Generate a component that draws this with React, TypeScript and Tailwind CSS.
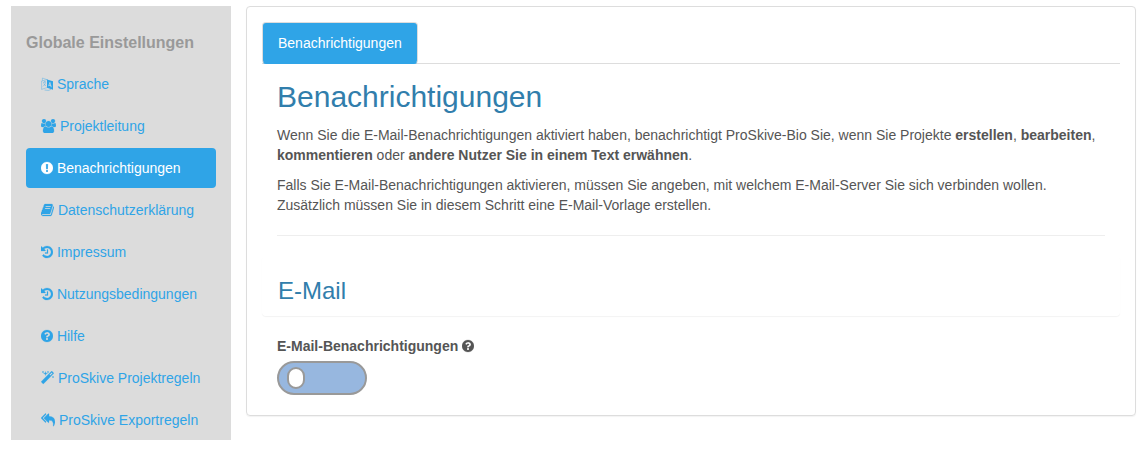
import type { ReactNode } from "react";

const EXCLAMATION =
  "M896 128q209 0 385.5 103t279.5 279.5 103 385.5-103 385.5-279.5 279.5-385.5 103-385.5-103-279.5-279.5-103-385.5 103-385.5 279.5-279.5 385.5-103zm128 1247v-190q0-14-9-23.5t-22-9.5h-192q-13 0-23 10t-10 23v190q0 13 10 23t23 10h192q13 0 22-9.5t9-23.5zm-2-344l18-621q0-12-10-18-10-8-24-8h-220q-14 0-24 8-10 6-10 18l17 621q0 10 10 17.5t24 7.5h185q14 0 23.5-7.5t10.5-17.5z";
const QUESTION =
  "M1024 1376v-192q0-14-9-23t-23-9h-192q-14 0-23 9t-9 23v192q0 14 9 23t23 9h192q14 0 23-9t9-23zm256-672q0-88-55.5-163t-138.5-116-170-41q-243 0-371 213-15 24 8 42l132 100q7 6 19 6 16 0 25-12 53-68 86-92 34-24 86-24 48 0 85.5 26t37.5 59q0 38-20 61t-68 45q-63 28-115.5 86.5t-52.5 125.5v36q0 14 9 23t23 9h192q14 0 23-9t9-23q0-19 21.5-49.5t54.5-49.5q32-18 49-28.5t46-35 44.5-48 28-60.5 12.5-81zm384 192q0 209-103 385.5t-279.5 279.5-385.5 103-385.5-103-279.5-279.5-103-385.5 103-385.5 279.5-279.5 385.5-103 385.5 103 279.5 279.5 103 385.5z";
const HISTORY =
  "M1664 896q0 156-61 298t-164 245-245 164-298 61q-172 0-327-72.5t-264-204.5q-7-10-6.5-22.5t8.5-20.5l137-138q10-9 25-9 16 2 23 12 73 95 179 147t225 52q104 0 198.5-40.5t163.5-109.5 109.5-163.5 40.5-198.5-40.5-198.5-109.5-163.5-163.5-109.5-198.5-40.5q-98 0-188 35.5t-160 101.5l137 138q31 30 14 69-17 40-59 40h-448q-26 0-45-19t-19-45v-448q0-42 40-59 39-17 69 14l130 129q107-101 244.5-156.5t284.5-55.5q156 0 298 61t245 164 164 245 61 298zm-640-288v448q0 14-9 23t-23 9h-320q-14 0-23-9t-9-23v-64q0-14 9-23t23-9h224v-352q0-14 9-23t23-9h64q14 0 23 9t9 23z";
const REPLY_ALL =
  "M640 1082v70q0 42-39 59-13 5-25 5-27 0-45-19l-512-512q-19-19-19-45t19-45l512-512q29-31 70-14 39 17 39 59v69l-397 398q-19 19-19 45t19 45zm1152 58q0 58-17 133.5t-38.5 138-48 125-40.5 90.5l-20 40q-8 17-28 17-6 0-9-1-25-8-23-34 43-400-106-565-64-71-170.5-110.5t-267.5-52.5v251q0 42-39 59-13 5-25 5-27 0-45-19l-512-512q-19-19-19-45t19-45l512-512q29-31 70-14 39 17 39 59v262q411 28 599 221 169 173 169 509z";
const BOOK =
  "M1703 478q40 57 18 129l-275 906q-19 64-76.5 107.5t-122.5 43.5h-923q-77 0-148.5-53.5t-99.5-131.5q-24-67-2-127 0-4 3-27t4-37q1-8-3-21.5t-3-19.5q2-11 8-21t16.5-23.5 16.5-23.5q23-38 45-91.5t30-91.5q3-10 .5-30t-.5-28q3-11 17-28t17-23q21-36 42-92t25-90q1-9-2.5-32t.5-28q4-13 22-30.5t22-22.5q19-26 42.5-84.5t27.5-96.5q1-8-3-25.5t-2-26.5q2-8 9-18t18-23 17-21q8-12 16.5-30.5t15-35 16-36 19.5-32 26.5-23.5 36-11.5 47.5 5.5l-1 3q38-9 51-9h761q74 0 114 56t18 130l-274 906q-36 119-71.5 153.5t-128.5 34.5h-869q-27 0-38 15-11 16-1 43 24 70 144 70h923q29 0 56-15.5t35-41.5l300-987q7-22 5-57 38 15 59 43zm-1064 2q-4 13 2 22.5t20 9.5h608q13 0 25.5-9.5t16.5-22.5l21-64q4-13-2-22.5t-20-9.5h-608q-13 0-25.5 9.5t-16.5 22.5zm-83 256q-4 13 2 22.5t20 9.5h608q13 0 25.5-9.5t16.5-22.5l21-64q4-13-2-22.5t-20-9.5h-608q-13 0-25.5 9.5t-16.5 22.5z";
const MAGIC =
  "M1254 581l293-293-107-107-293 293zm447-293q0 27-18 45l-1286 1286q-18 18-45 18t-45-18l-198-198q-18-18-18-45t18-45l1286-1286q18-18 45-18t45 18l198 198q18 18 18 45zm-1351-190l98 30-98 30-30 98-30-98-98-30 98-30 30-98zm350 162l196 60-196 60-60 196-60-196-196-60 196-60 60-196zm930 478l98 30-98 30-30 98-30-98-98-30 98-30 30-98zm-640-640l98 30-98 30-30 98-30-98-98-30 98-30 30-98z";
const USERS =
  "M529 896q-162 5-265 128h-134q-82 0-138-40.5t-56-118.5q0-353 124-353 6 0 43.5 21t97.5 42.5 119 21.5q67 0 133-23-5 37-5 66 0 139 81 256zm1071 637q0 120-73 189.5t-194 69.5h-874q-121 0-194-69.5t-73-189.5q0-53 3.5-103.5t14-109 26.5-108.5 43-97.5 62-81 85.5-53.5 111.5-20q10 0 43 21.5t73 48 107 48 135 21.5 135-21.5 107-48 73-48 43-21.5q61 0 111.5 20t85.5 53.5 62 81 43 97.5 26.5 108.5 14 109 3.5 103.5zm-1024-1277q0 106-75 181t-181 75-181-75-75-181 75-181 181-75 181 75 75 181zm704 384q0 159-112.5 271.5t-271.5 112.5-271.5-112.5-112.5-271.5 112.5-271.5 271.5-112.5 271.5 112.5 112.5 271.5zm576 225q0 78-56 118.5t-138 40.5h-134q-103-123-265-128 81-117 81-256 0-29-5-66 66 23 133 23 59 0 119-21.5t97.5-42.5 43.5-21q124 0 124 353zm-128-609q0 106-75 181t-181 75-181-75-75-181 75-181 181-75 181 75 75 181z";

function Glyph({ viewBox, d }: { viewBox: string; d: string }) {
  return (
    <svg
      aria-hidden="true"
      viewBox={viewBox}
      className="inline-block h-3.5 w-auto align-[-2px]"
      fill="currentColor"
      stroke="currentColor"
      strokeWidth="30"
    >
      <path d={d} />
    </svg>
  );
}

function LanguageGlyph() {
  return (
    <svg aria-hidden="true" viewBox="0 0 12 14" className="inline-block h-3.5 w-auto align-[-2px]" fill="none" stroke="currentColor">
      <path d="M6.5 2.5.6 4v8.4l5.9-2M1.4 3.6V1l5 1.8" strokeWidth=".5" opacity=".7" />
      <path d="M2 5.6l3-1M3.4 4.2v1M4.6 5.4Q4 8 2 9.4M2.6 6.6 5 9.2M3.5 13l4 .4 2.5-1" strokeWidth=".6" opacity=".7" />
      <path d="M6 2.4 12 4.2v8.6l-6-2z" fill="currentColor" stroke="none" />
      <path d="m7.6 9.2 1.3-3.8 1.4 4.8M8 8.2l2 .6" stroke="#dcdcdc" strokeWidth=".7" />
    </svg>
  );
}

const items: { label: string; icon: ReactNode; active?: boolean }[] = [
  { label: "Sprache", icon: <LanguageGlyph /> },
  { label: "Projektleitung", icon: <Glyph viewBox="-64 0 1920 1792" d={USERS} /> },
  { label: "Benachrichtigungen", icon: <Glyph viewBox="128 0 1536 1792" d={EXCLAMATION} />, active: true },
  { label: "Datenschutzerklärung", icon: <Glyph viewBox="64 0 1664 1792" d={BOOK} /> },
  { label: "Impressum", icon: <Glyph viewBox="128 0 1536 1792" d={HISTORY} /> },
  { label: "Nutzungsbedingungen", icon: <Glyph viewBox="128 0 1536 1792" d={HISTORY} /> },
  { label: "Hilfe", icon: <Glyph viewBox="128 0 1536 1792" d={QUESTION} /> },
  { label: "ProSkive Projektregeln", icon: <Glyph viewBox="64 0 1664 1792" d={MAGIC} /> },
  { label: "ProSkive Exportregeln", icon: <Glyph viewBox="0 0 1792 1792" d={REPLY_ALL} /> },
];

export default function App() {
  return (
    <div className="flex items-start gap-[15px] bg-white pt-1.5 pr-2 pl-[11px] font-['Liberation_Sans',Arial,sans-serif] text-sm text-[#555]">
      <nav aria-labelledby="settings-title" className="w-[220px] shrink-0 bg-[#dcdcdc] px-[15px] pt-[27px]">
        <h2 id="settings-title" className="mb-[11px] text-base leading-5 font-bold text-[#999]">
          Globale Einstellungen
        </h2>
        <ul className="flex flex-col gap-0.5">
          {items.map(({ label, icon, active }) => (
            <li key={label}>
              <a
                href="#"
                aria-current={active ? "page" : undefined}
                className={
                  active
                    ? "block rounded bg-[#2fa4e7] px-[15px] py-2.5 leading-5 whitespace-nowrap text-white"
                    : "block rounded px-[15px] py-2.5 leading-5 whitespace-nowrap text-[#2fa4e7]"
                }
              >
                {icon} {label}
              </a>
            </li>
          ))}
        </ul>
      </nav>

      <main className="min-w-0 flex-1 rounded border border-[#ddd] p-[15px] pb-5 shadow-[0_1px_1px_rgba(0,0,0,0.05)]">
        <div role="tablist" className="flex border-b border-[#ddd]">
          <button
            type="button"
            role="tab"
            aria-selected="true"
            className="-mb-px rounded border border-[#ddd] border-b-transparent bg-[#2fa4e7] px-[15px] py-2.5 leading-5 text-white"
          >
            Benachrichtigungen
          </button>
        </div>

        <section className="px-[15px] pt-4">
          <h1 className="mb-3 text-[30px] leading-[33px] text-[#317eac]">Benachrichtigungen</h1>
          <p className="mb-2.5 leading-5">
            Wenn Sie die E-Mail-Benachrichtigungen aktiviert haben, benachrichtigt ProSkive-Bio Sie, wenn Sie Projekte{" "}
            <b>erstellen</b>, <b>bearbeiten</b>, <b>kommentieren</b> oder{" "}
            <b>andere Nutzer Sie in einem Text erwähnen</b>.
          </p>
          <p className="leading-5">
            Falls Sie E-Mail-Benachrichtigungen aktivieren, müssen Sie angeben, mit welchem E-Mail-Server Sie sich
            verbinden wollen. Zusätzlich müssen Sie in diesem Schritt eine E-Mail-Vorlage erstellen.
          </p>
          <hr className="my-5 border-[#eee]" />
        </section>

        <div className="rounded border border-transparent px-[15px] pt-[21px] pb-[11px] shadow-[0_1px_1px_rgba(0,0,0,0.05)]">
          <h2 className="text-2xl leading-[26px] text-[#317eac]">E-Mail</h2>
        </div>

        <div className="px-[15px] pt-5">
          <label htmlFor="mail-toggle" className="mb-[5px] block leading-5 font-bold">
            E-Mail-Benachrichtigungen <Glyph viewBox="128 0 1536 1792" d={QUESTION} />
          </label>
          <input
            id="mail-toggle"
            type="checkbox"
            role="switch"
            className="flex h-[34px] w-[90px] appearance-none items-center rounded-full border-2 border-[#999] bg-[#97b7df] px-2 before:h-[22px] before:w-[18px] before:rounded-full before:border-2 before:border-[#999] before:bg-white before:content-[''] checked:justify-end"
          />
        </div>
      </main>
    </div>
  );
}
